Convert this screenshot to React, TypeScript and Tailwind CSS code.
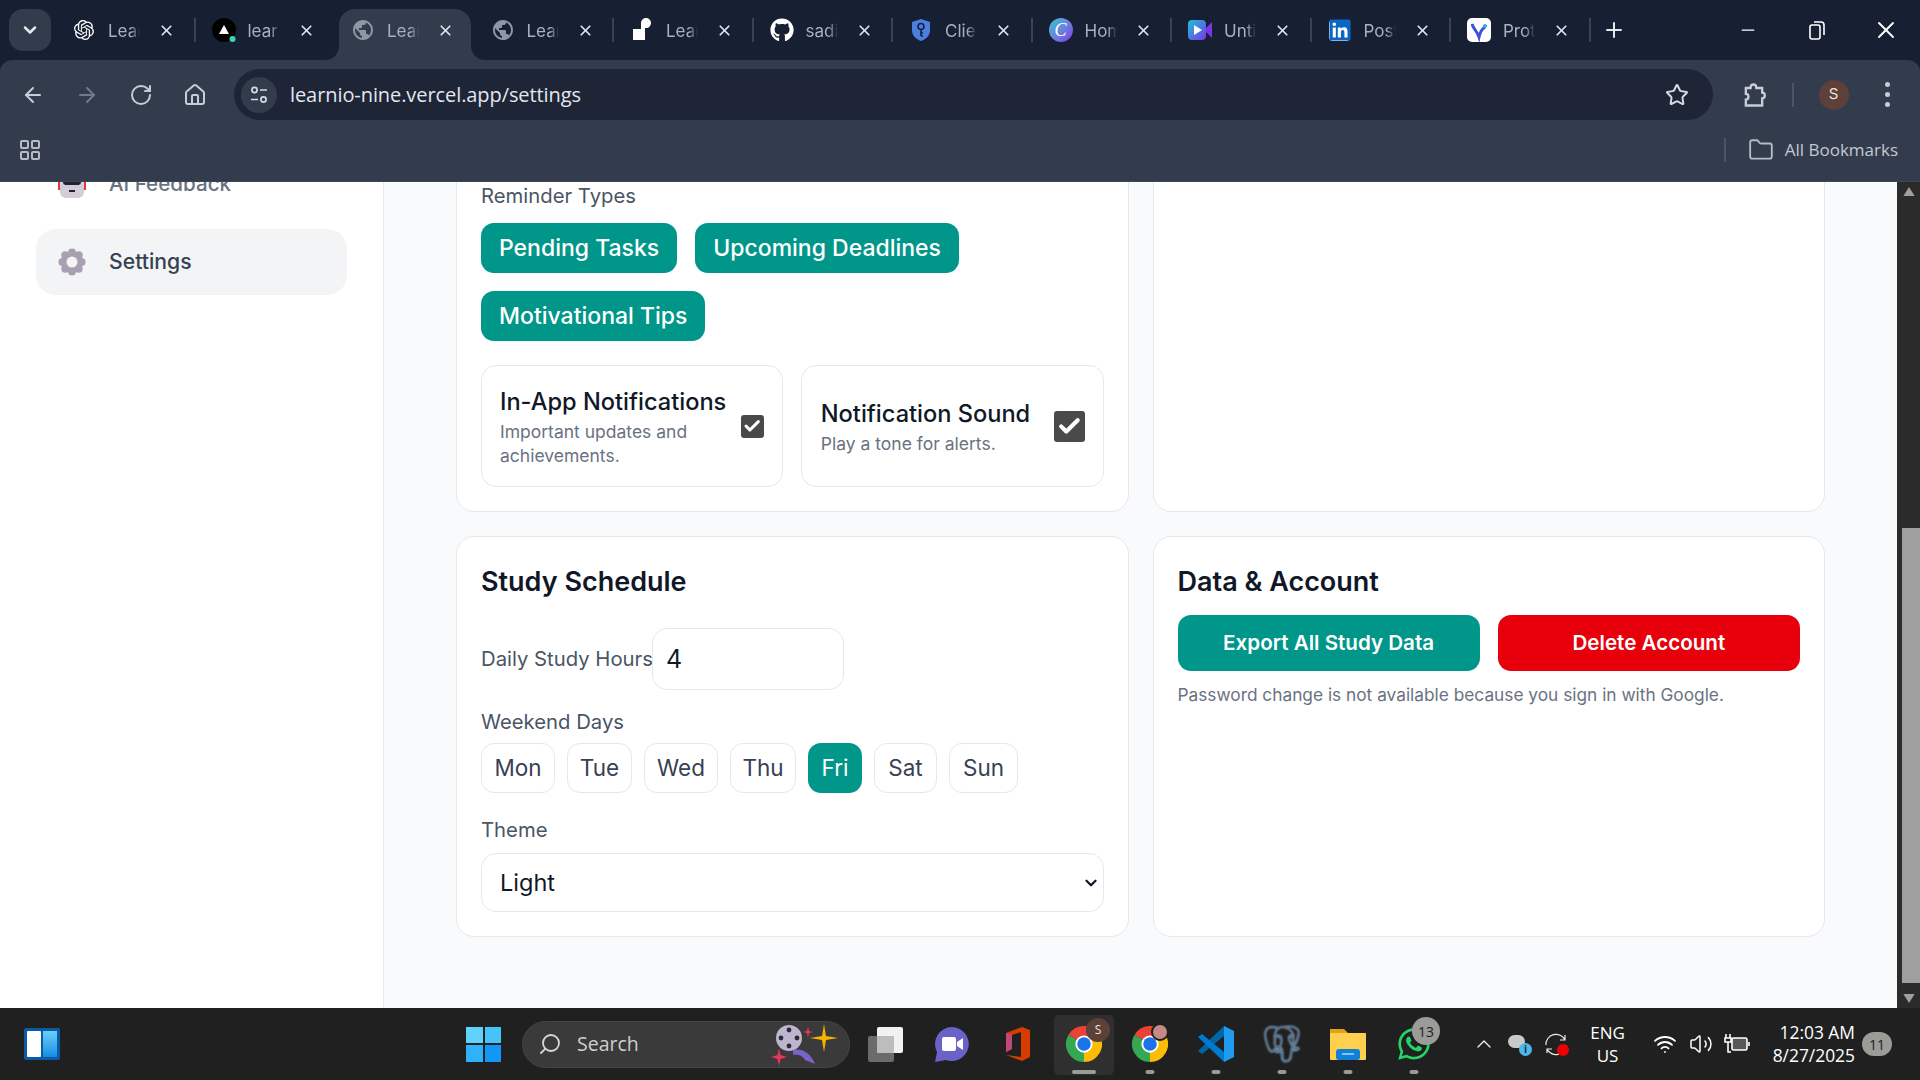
import React from 'react';
import {
  ArrowLeft,
  ArrowRight,
  Check,
  ChevronDown,
  ChevronUp,
  Folder,
  LayoutGrid,
  Minus,
  Plus,
  RotateCw,
  House,
  Search,
  Star,
  Volume2,
  Wifi,
  X,
} from 'lucide-react';
import { FaGithub, FaLinkedin, FaWhatsapp } from 'react-icons/fa';
import { MdPublic } from 'react-icons/md';
import { SiOpenai, SiPostgresql } from 'react-icons/si';

const Chrome = () => (
  <svg viewBox="0 0 48 48" className="w-9 h-9">
    <path d="M24 24 L3.2 12 A24 24 0 0 1 44.8 12 Z" fill="#ea4335" />
    <path d="M24 24 L3.2 12 A24 24 0 0 0 24 48 Z" fill="#34a853" />
    <path d="M24 24 L44.8 12 A24 24 0 0 1 24 48 Z" fill="#fbbc04" />
    <circle cx="24" cy="24" r="11.5" fill="#fff" />
    <circle cx="24" cy="24" r="9" fill="#1a73e8" />
  </svg>
);

const tabs: { title: string; icon: React.ReactNode; active?: boolean }[] = [
  { title: 'Lear', icon: <SiOpenai className="w-5 h-5 text-white" /> },
  {
    title: 'lear',
    icon: (
      <svg viewBox="0 0 24 24" className="w-6 h-6">
        <circle cx="12" cy="12" r="12" fill="#000" />
        <path d="M12 7 L17 16 H7 Z" fill="#fff" />
        <circle cx="20.5" cy="21" r="3" fill="#34d9b0" />
      </svg>
    ),
  },
  { title: 'Lear', icon: <MdPublic className="w-6 h-6 text-[#8f97a5]" />, active: true },
  { title: 'Lear', icon: <MdPublic className="w-6 h-6 text-[#8f97a5]" /> },
  {
    title: 'Lear',
    icon: (
      <svg viewBox="0 0 24 24" className="w-6 h-6">
        <path d="M3 11 H11 V5 A5 5 0 0 1 21 5 A5 5 0 0 1 15 10 V22 H3 Z" fill="#fff" />
      </svg>
    ),
  },
  { title: 'sadi', icon: <FaGithub className="w-6 h-6 text-white" /> },
  {
    title: 'Clier',
    icon: (
      <svg viewBox="0 0 24 24" className="w-6 h-6">
        <path d="M12 1 L21 4 V12 C21 18 17 21 12 23 C7 21 3 18 3 12 V4 Z" fill="#4b7fe0" />
        <circle cx="12" cy="8.5" r="3" fill="none" stroke="#16213a" strokeWidth="1.6" />
        <path d="M12 11.5 V18 M12 15 H14 M12 18 H14" stroke="#16213a" strokeWidth="1.6" />
      </svg>
    ),
  },
  {
    title: 'Hom',
    icon: (
      <div className="w-6 h-6 rounded-full bg-gradient-to-br from-[#00c4cc] to-[#7d2ae8] flex items-center justify-center text-white italic text-[18px] leading-none [font-family:'Liberation_Serif',serif]">
        C
      </div>
    ),
  },
  {
    title: 'Unti',
    icon: (
      <svg viewBox="0 0 24 24" className="w-6 h-6">
        <defs>
          <linearGradient id="vid" x1="0" y1="0" x2="1" y2="1">
            <stop offset="0" stopColor="#18c5d8" />
            <stop offset="1" stopColor="#7a35e8" />
          </linearGradient>
        </defs>
        <rect x="0" y="2" width="18" height="20" rx="4" fill="url(#vid)" />
        <path d="M18 10 L24 4 V20 L18 14 Z" fill="#7a35e8" />
        <path d="M6 7 L14 12 L6 17 Z" fill="#fff" />
      </svg>
    ),
  },
  {
    title: 'Post',
    icon: (
      <div className="w-[21px] h-[21px] bg-white rounded-sm flex items-center justify-center">
        <FaLinkedin className="w-[24px] h-[24px] shrink-0 text-[#0a66c2]" />
      </div>
    ),
  },
  {
    title: 'Prot',
    icon: (
      <svg viewBox="0 0 24 24" className="w-6 h-6">
        <rect width="24" height="24" rx="5" fill="#fff" />
        <path d="M5 6 C7 12 10 13 12 19 C13 14 15 11 18 9" fill="none" stroke="#3f51d8" strokeWidth="3" />
        <circle cx="18" cy="8" r="2" fill="#2ea8f0" />
      </svg>
    ),
  },
];

const Tab = ({ title, icon, active, showSep }: { title: string; icon: React.ReactNode; active?: boolean; showSep: boolean }) => (
  <div className="relative w-[139.5px] h-[51px] shrink-0 flex items-center pb-[9px]">
    {active && (
      <>
        <div className="absolute inset-y-0 left-1 right-1 bg-[#333c4d] rounded-t-2xl" />
        <svg viewBox="0 0 14 14" className="absolute bottom-0 -left-[10px] w-[14px] h-[14px]">
          <path d="M14 0 V14 H0 A14 14 0 0 0 14 0 Z" fill="#333c4d" />
        </svg>
        <svg viewBox="0 0 14 14" className="absolute bottom-0 -right-[10px] w-[14px] h-[14px]">
          <path d="M0 0 V14 H14 A14 14 0 0 1 0 0 Z" fill="#333c4d" />
        </svg>
      </>
    )}
    <div className="relative w-[56px] flex justify-center">{icon}</div>
    <span className="relative -ml-[4px] mt-[3px] w-[32px] overflow-hidden whitespace-nowrap text-[17px] text-[#a9b1bf] [mask-image:linear-gradient(to_right,black_70%,transparent)]">
      {title}
    </span>
    <X className="relative ml-[18px] w-[17px] h-[17px] text-[#dfe3ea]" strokeWidth={2.4} />
    {showSep && <div className="absolute right-0 top-[9px] w-[2px] h-6 bg-[#3a4354]" />}
  </div>
);

const TabStrip = () => (
  <div className="h-[60px] shrink-0 bg-[#172032] flex items-start pt-[9px]">
    <div className="ml-[9px] w-[42px] h-[42px] rounded-[14px] bg-[#333c4d] flex items-center justify-center">
      <ChevronDown className="w-5 h-5 text-[#e5e7eb]" strokeWidth={3} />
    </div>
    <div className="ml-[5px] flex">
      {tabs.map((t, i) => (
        <Tab key={i} title={t.title} icon={t.icon} active={t.active} showSep={i !== 1 && i !== 2} />
      ))}
    </div>
    <div className="ml-[11px] h-[42px] flex items-center">
      <Plus className="w-6 h-6 text-[#e5e7eb]" strokeWidth={2} />
    </div>
    <div className="ml-auto h-[42px] flex items-center text-white">
      <div className="w-[69px] flex justify-center"><Minus className="w-5 h-5" strokeWidth={1.5} /></div>
      <div className="w-[69px] flex justify-center">
        <svg viewBox="0 0 16 20" className="w-[16px] h-[20px]" fill="none" stroke="currentColor" strokeWidth="1.6">
          <rect x="1" y="5" width="10" height="14" rx="2" />
          <path d="M5 2 H12 A3 3 0 0 1 15 5 V15" />
        </svg>
      </div>
      <div className="w-[69px] flex justify-center"><X className="w-7 h-7" strokeWidth={1.6} /></div>
    </div>
  </div>
);

const Toolbar = () => (
  <div className="h-[122px] shrink-0 bg-[#333c4d] rounded-t-xl border-b border-[#3f4756]">
    <div className="h-[60px] flex items-center mt-0 pt-[9px]">
      <div className="w-[234px] flex items-center text-[#c7ccd6]">
        <div className="w-[54px] ml-[6px] flex justify-center"><ArrowLeft className="w-6 h-6" /></div>
        <div className="w-[54px] flex justify-center"><ArrowRight className="w-6 h-6 text-[#737b8a]" /></div>
        <div className="w-[54px] flex justify-center"><RotateCw className="w-6 h-6" /></div>
        <div className="w-[54px] flex justify-center"><House className="w-6 h-6" /></div>
      </div>
      <div className="w-[1479px] h-[51px] rounded-full bg-[#1d2536] flex items-center pl-[7px] pr-[24px]">
        <div className="w-9 h-9 rounded-full bg-[#333c4d] flex items-center justify-center text-[#d5d9e0]">
          <svg viewBox="0 0 20 20" className="w-5 h-5" fill="none" stroke="currentColor" strokeWidth="1.7">
            <circle cx="5.5" cy="5" r="2.6" />
            <path d="M11 5 H18 M2 14.5 H9" />
            <circle cx="14.5" cy="14.5" r="2.6" />
          </svg>
        </div>
        <span className="ml-[13px] text-[20px] text-[#e3e7ee] [font-family:'Open_Sans',sans-serif] tracking-[-0.08px]">
          learnio-nine.vercel.app/settings
        </span>
        <Star className="ml-auto w-6 h-6 text-[#d5d9e0]" strokeWidth={2} />
      </div>
      <div className="flex-1 flex items-center text-[#c7ccd6]">
        <div className="ml-[26px] w-[30px] flex justify-center">
          <svg viewBox="0 0 24 24" className="w-7 h-7" fill="none" stroke="currentColor" strokeWidth="2">
            <path d="M5 6 H9 C9 2 14 2 14 6 H19 V10 C22 10 22 15 19 15 V21 H5 V16 C8 16 8 11 5 11 Z" />
          </svg>
        </div>
        <div className="ml-[23px] w-[1.5px] h-6 bg-[#4c5565]" />
        <div className="ml-[25px] w-[30px] h-[30px] rounded-full bg-[#5d4037] flex items-center justify-center text-[15px] text-[#e9e2df]">
          S
        </div>
        <div className="ml-[36px] flex flex-col gap-[5px]">
          <div className="w-[5px] h-[5px] rounded-full bg-[#c7ccd6]" />
          <div className="w-[5px] h-[5px] rounded-full bg-[#c7ccd6]" />
          <div className="w-[5px] h-[5px] rounded-full bg-[#c7ccd6]" />
        </div>
      </div>
    </div>
    <div className="h-[60px] flex items-center pl-[18px] text-[#b6bbc5]">
      <LayoutGrid className="w-[24px] h-[24px]" strokeWidth={2} />
      <div className="ml-auto w-[1.5px] h-6 bg-[#4c5565]" />
      <Folder className="ml-[22px] w-[26px] h-[26px]" strokeWidth={1.7} />
      <span className="ml-[11px] mr-[22px] text-[17px] text-[#c4c8d0] [font-family:'Open_Sans',sans-serif]">
        All Bookmarks
      </span>
    </div>
  </div>
);

const Sidebar = () => (
  <aside className="w-[384px] shrink-0 bg-white border-r border-gray-200 overflow-hidden px-[36px]">
    <div className="w-[311px] -mt-[31px] flex flex-col gap-[12px]">
      <div className="h-[66px] flex items-center pl-[22px] gap-[23px] text-[20.6px] font-medium text-gray-500">
        <svg viewBox="0 0 28 28" className="w-7 h-7">
          <rect x="0" y="4" width="3" height="16" fill="#e53935" />
          <rect x="25" y="4" width="3" height="16" fill="#e53935" />
          <rect x="2" y="0" width="24" height="28" rx="6" fill="#d3cdd8" />
          <rect x="5" y="2" width="18" height="13" rx="3" fill="#1f2430" />
          <rect x="8" y="7" width="3" height="3" fill="#2196f3" />
          <rect x="17" y="7" width="3" height="3" fill="#2196f3" />
          <rect x="11" y="20" width="6" height="2" fill="#1f2430" />
        </svg>
        AI Feedback
      </div>
      <div className="h-[66px] flex items-center pl-[22px] gap-[23px] rounded-[20px] bg-gray-100 text-[21.2px] font-medium text-gray-700">
        <svg viewBox="0 0 28 28" className="w-7 h-7">
          <g fill="#a89fb0">
            <circle cx="14" cy="4.5" r="4" />
            <circle cx="14" cy="23.5" r="4" />
            <circle cx="4.5" cy="14" r="4" />
            <circle cx="23.5" cy="14" r="4" />
            <circle cx="7.3" cy="7.3" r="4" />
            <circle cx="20.7" cy="7.3" r="4" />
            <circle cx="7.3" cy="20.7" r="4" />
            <circle cx="20.7" cy="20.7" r="4" />
            <circle cx="14" cy="14" r="10" />
          </g>
          <circle cx="14" cy="14" r="5.5" fill="#f3f4f6" />
        </svg>
        Settings
      </div>
    </div>
  </aside>
);

const tealChip = 'h-[50px] px-[18px] rounded-[13px] bg-teal-600 text-white text-[23px] font-medium flex items-center';
const label = 'text-[20.3px] leading-[30px] text-gray-600';

const Toggle = ({ title, sub, size, pad }: { title: string; sub: string; size: string; pad: string }) => (
  <div className={`flex-1 border border-gray-200 rounded-[15px] flex items-center justify-between ${pad}`}>
    <div className="pt-[3px]">
      <div className="text-[23.6px] leading-[30px] font-medium text-gray-900">{title}</div>
      <div className="text-[17.5px] leading-[24px] text-gray-500 mt-[3px]">{sub}</div>
    </div>
    <div className={`${size} shrink-0 rounded-[3px] bg-[#4a4a4a] flex items-center justify-center`}>
      <Check className="w-[80%] h-[80%] text-white" strokeWidth={4} />
    </div>
  </div>
);

const days = [
  { name: 'Mon', width: 'w-[74px]' },
  { name: 'Tue', width: 'w-[65px]' },
  { name: 'Wed', width: 'w-[74px]' },
  { name: 'Thu', width: 'w-[66px]' },
  { name: 'Fri', width: 'w-[54px]' },
  { name: 'Sat', width: 'w-[63px]' },
  { name: 'Sun', width: 'w-[69px]' },
];

const Scrollbar = () => (
  <div className="w-[23px] shrink-0 bg-[#2b2b2b] flex flex-col">
    <div className="h-[19px] flex items-center justify-center">
      <svg viewBox="0 0 10 8" className="w-[12px] h-[9px]"><path d="M5 0 L10 8 H0 Z" fill="#9f9f9f" /></svg>
    </div>
    <div className="flex-1 pl-[5px] flex flex-col">
      <div className="h-[327px]" />
      <div className="h-[455px] bg-[#9f9f9f]" />
    </div>
    <div className="h-[19px] flex items-center justify-center">
      <svg viewBox="0 0 10 8" className="w-[12px] h-[9px]"><path d="M5 8 L10 0 H0 Z" fill="#9f9f9f" /></svg>
    </div>
  </div>
);

const Main = () => (
  <main className="flex-1 min-w-0 bg-gray-50 overflow-hidden pl-[72px] pr-[72px]">
    <div className="grid grid-cols-2 gap-[24px]">
      {/* first row, scrolled so that its top is out of view */}
      <section className="-mt-[31px] h-[361px] bg-white border border-gray-200 rounded-[18px] px-[24px] pt-[29px]">
        <div className={label}>Reminder Types</div>
        <div className="mt-[12px] flex flex-wrap gap-[18px]">
          <div className={tealChip}>Pending Tasks</div>
          <div className={tealChip}>Upcoming Deadlines</div>
          <div className={tealChip}>Motivational Tips</div>
        </div>
        <div className="mt-[24px] h-[122px] flex gap-[18px]">
          <Toggle title="In-App Notifications" sub="Important updates and achievements." size="w-[23px] h-[23px]" pad="pl-[18px] pr-[18px]" />
          <Toggle title="Notification Sound" sub="Play a tone for alerts." size="w-[31px] h-[31px]" pad="pl-[19px] pr-[18px]" />
        </div>
      </section>
      <section className="-mt-[31px] h-[361px] bg-white border border-gray-200 rounded-[18px]" />

      <section className="h-[401px] bg-white border border-gray-200 rounded-[18px] px-[24px] pt-[25px]">
        <h2 className="text-[27px] leading-[40px] font-semibold text-gray-900">Study Schedule</h2>
        <div className="mt-[26px] flex items-center">
          <span className={label}>Daily Study Hours</span>
          <input
            readOnly
            value="4"
            className="-ml-[1px] w-[192px] h-[62px] border border-gray-200 rounded-[15px] px-[13px] text-[25px] text-gray-900 bg-white"
          />
        </div>
        <div className={`${label} mt-[17px]`}>Weekend Days</div>
        <div className="mt-[6px] flex gap-[12px]">
          {days.map((d) =>
            d.name === 'Fri' ? (
              <div key={d.name} className={`${d.width} h-[50px] rounded-[13px] bg-teal-600 text-white text-[22.5px] flex items-center justify-center`}>
                {d.name}
              </div>
            ) : (
              <div key={d.name} className={`${d.width} h-[50px] rounded-[13px] border border-gray-200 text-gray-700 text-[22.5px] flex items-center justify-center`}>
                {d.name}
              </div>
            )
          )}
        </div>
        <div className={`${label} mt-[22px]`}>Theme</div>
        <div className="mt-[8px] h-[59px] border border-gray-200 rounded-[15px] pl-[18px] pr-[3px] flex items-center justify-between text-[23.5px] text-gray-900">
          Light
          <ChevronDown className="w-[18px] h-[18px] text-gray-900" strokeWidth={3} />
        </div>
      </section>

      <section className="h-[401px] bg-white border border-gray-200 rounded-[18px] px-[24px] pt-[25px]">
        <h2 className="text-[27px] leading-[40px] font-semibold text-gray-900">Data &amp; Account</h2>
        <div className="mt-[13px] grid grid-cols-2 gap-[18px]">
          <div className="h-[56px] rounded-[13px] bg-teal-600 text-white text-[20.6px] font-semibold flex items-center justify-center">
            Export All Study Data
          </div>
          <div className="h-[56px] rounded-[13px] bg-red-600 text-white text-[20.6px] font-semibold flex items-center justify-center">
            Delete Account
          </div>
        </div>
        <p className="mt-[12px] text-[17.3px] leading-[24px] text-gray-500">
          Password change is not available because you sign in with Google.
        </p>
      </section>
    </div>
  </main>
);

const Dot = ({ wide }: { wide?: boolean }) => (
  <div className={`absolute bottom-[6px] left-1/2 -translate-x-1/2 h-[4px] rounded-full bg-[#9a9a9a] ${wide ? 'w-[24px]' : 'w-[9px]'}`} />
);

const AppSlot = ({ children, dot, wide }: { children: React.ReactNode; dot?: boolean; wide?: boolean }) => (
  <div className="relative w-[66px] h-[72px] flex items-center justify-center">
    {wide && <div className="absolute inset-x-[3px] top-[7px] bottom-[5px] rounded-[5px] bg-[#2f2f2f]" />}
    <div className="relative">{children}</div>
    {dot && <Dot wide={wide} />}
  </div>
);

const Taskbar = () => (
  <footer className="h-[72px] shrink-0 bg-[#202020] flex items-center text-white [font-family:'Open_Sans',sans-serif]">
    <div className="ml-[24px] w-[36px] h-[32px] bg-[#0b5aa5] rounded-[2px] flex gap-[2px] p-[3px]">
      <div className="w-[14px] bg-white rounded-[1px]" />
      <div className="flex-1 bg-gradient-to-b from-[#69d0fb] to-[#0c8de0]" />
    </div>
    <div className="ml-[406px] w-[35px] h-[35px] grid grid-cols-2 grid-rows-2 gap-[2px]">
      <div className="bg-[#5fd3fb]" />
      <div className="bg-[#45c3fb]" />
      <div className="bg-[#2fb2fb]" />
      <div className="bg-[#1297f5]" />
    </div>
    <div className="ml-[21px] w-[328px] h-[47px] rounded-full bg-[#3a3a3a] border border-[#444] flex items-center pl-[15px] pr-[6px]">
      <Search className="w-[24px] h-[24px] -scale-x-100 text-[#d8d8d8]" strokeWidth={1.8} />
      <span className="ml-[15px] text-[19.5px] text-[#cfcfcf]">Search</span>
      <svg viewBox="0 0 76 44" className="ml-auto w-[76px] h-[44px]">
        <circle cx="22" cy="16" r="13" fill="#bdb6cf" />
        <g fill="#2d2a3a">
          <circle cx="22" cy="8" r="2.4" />
          <circle cx="22" cy="24" r="2.4" />
          <circle cx="14" cy="16" r="2.4" />
          <circle cx="30" cy="16" r="2.4" />
        </g>
        <path d="M26 28 C36 26 44 32 48 42 L38 38 C36 34 32 32 26 33 Z" fill="#7a62c9" />
        <path d="M57 2 L59 14 L71 16 L59 18 L57 30 L55 18 L43 16 L55 14 Z" fill="#f5b400" />
        <path d="M12 26 L13.5 33 L20 35 L13.5 37 L12 44 L10.5 37 L4 35 L10.5 33 Z" fill="#e8355c" />
        <path d="M41 4 L42 9 L46 10 L42 11 L41 16 L40 11 L36 10 L40 9 Z" fill="#e8355c" />
      </svg>
    </div>
    <div className="ml-[3px] flex">
      <AppSlot>
        <svg viewBox="0 0 36 36" className="w-[36px] h-[36px]">
          <rect x="0" y="10" width="26" height="26" rx="2" fill="#6b6b6b" />
          <rect x="9" y="1" width="26" height="26" rx="2" fill="#f2f2f2" />
          <rect x="9" y="10" width="17" height="17" fill="#bdbdbd" />
        </svg>
      </AppSlot>
      <AppSlot>
        <svg viewBox="0 0 36 36" className="w-[36px] h-[36px]">
          <path d="M18 1 A17 17 0 1 1 12 34 L1 36 L3 26 A17 17 0 0 1 18 1 Z" fill="#6a62c8" />
          <rect x="8" y="11" width="14" height="14" rx="2" fill="#fff" />
          <path d="M23 16 L29 12 V24 L23 20 Z" fill="#fff" />
        </svg>
      </AppSlot>
      <AppSlot>
        <svg viewBox="0 0 26 34" className="w-[26px] h-[34px]">
          <path d="M1 6 L17 0 L25 3 V30 L17 34 L1 28 L16 30 V5 L7 8 V22 L1 25 Z" fill="#d83b01" />
          <path d="M1 6 L7 8 V22 L1 25 Z" fill="#c2477a" />
        </svg>
      </AppSlot>
      <AppSlot dot wide>
        <div className="relative">
          <Chrome />
          <div className="absolute -top-[8px] -right-[8px] w-[24px] h-[24px] rounded-full bg-[#5d4037] flex items-center justify-center text-[12px] text-[#e9e2df]">
            S
          </div>
        </div>
      </AppSlot>
      <AppSlot dot>
        <div className="relative">
          <Chrome />
          <div className="absolute -top-[3px] -right-[1px] w-[18px] h-[18px] rounded-full bg-[#c58a84] border-2 border-[#202020]" />
        </div>
      </AppSlot>
      <AppSlot dot>
        <svg viewBox="0 0 36 36" className="w-[36px] h-[36px]">
          <path d="M26 0 L36 5 V31 L26 36 Z" fill="#1f9cf0" />
          <path d="M26 0 L26 10 L9 24 L4 28 L0 25 L26 0 Z" fill="#0065a9" />
          <path d="M0 11 L4 8 L26 26 V36 Z" fill="#007acc" />
        </svg>
      </AppSlot>
      <AppSlot dot>
        <SiPostgresql className="w-[36px] h-[36px] text-[#3f74a3] [filter:drop-shadow(0_0_1px_#dfe8f0)]" />
      </AppSlot>
      <AppSlot dot>
        <svg viewBox="0 0 36 36" className="w-[36px] h-[36px]">
          <path d="M0 3 H14 L18 7 H36 V33 H0 Z" fill="#e0a21a" />
          <rect x="0" y="7" width="36" height="27" rx="1" fill="#ffd04d" />
          <rect x="6" y="23" width="24" height="11" rx="3" fill="#1280d6" />
          <rect x="12" y="27" width="12" height="2" fill="#7fc4f5" />
        </svg>
      </AppSlot>
      <AppSlot dot>
        <div className="relative">
          <FaWhatsapp className="w-[36px] h-[36px] text-[#25d366]" />
          <div className="absolute -top-[9px] -right-[8px] w-[28px] h-[28px] rounded-full bg-[#9b9b97] flex items-center justify-center text-[14px] text-[#1d1d1d]">
            13
          </div>
        </div>
      </AppSlot>
    </div>
    <div className="ml-[19px] flex items-center">
      <div className="w-[36px] flex justify-center"><ChevronUp className="w-6 h-6 text-[#eee]" strokeWidth={1.4} /></div>
      <div className="w-[36px] flex justify-center">
        <div className="relative w-[24px] h-[20px]">
          <div className="absolute left-0 top-[1px] w-[17px] h-[13px] rounded-full bg-[#c9c9c9]" />
          <div className="absolute right-0 bottom-[-2px] w-[13px] h-[13px] rounded-full bg-[#4fb6ec] text-[10px] leading-[13px] text-center font-bold text-[#10324a]">i</div>
        </div>
      </div>
      <div className="w-[36px] flex justify-center">
        <div className="relative">
          <svg viewBox="0 0 24 24" className="w-[24px] h-[24px]" fill="none" stroke="#eee" strokeWidth="1.2">
            <path d="M2 13 A10 10 0 0 1 21 8 M21 3 V8 H16 M22 13 A10 10 0 0 1 3 17 M3 21 V17 H8" />
          </svg>
          <div className="absolute right-[-1px] bottom-[0px] w-[12px] h-[12px] rounded-full bg-[#f00000]" />
        </div>
      </div>
      <div className="w-[64px] pl-[3px] flex flex-col items-center text-[17px] leading-[23px]">
        <span>ENG</span>
        <span>US</span>
      </div>
      <div className="ml-[9px] w-[36px] flex justify-center"><Wifi className="w-[24px] h-[24px]" strokeWidth={1.8} /></div>
      <div className="w-[36px] flex justify-center"><Volume2 className="w-[24px] h-[24px]" strokeWidth={1.5} /></div>
      <div className="w-[36px] flex justify-center">
        <svg viewBox="0 0 26 22" className="w-[26px] h-[22px]" fill="none" stroke="#fff" strokeWidth="1.6">
          <path d="M2 1 V5 M6 1 V5 M1 5 H7 V9 H1 Z M4 9 V19 H7" />
          <rect x="8" y="5" width="15" height="12" rx="1.5" fill="#fff" fillOpacity="0.25" />
          <path d="M25 9 V13" />
        </svg>
      </div>
    </div>
    <div className="ml-[16px] w-[84px] flex flex-col items-end text-[17.4px] leading-[23px] whitespace-nowrap">
      <span>12:03 AM</span>
      <span>8/27/2025</span>
    </div>
    <div className="ml-[7px] w-[30px] h-[24px] rounded-full bg-[#9b9b97] flex items-center justify-center text-[14px] text-[#1d1d1d]">
      11
    </div>
  </footer>
);

const App = () => {
  return (
    <div className="w-[1920px] h-[1080px] flex flex-col overflow-hidden bg-[#172032] [font-family:Inter,sans-serif]">
      <TabStrip />
      <Toolbar />
      <div className="flex-1 min-h-0 flex">
        <Sidebar />
        <Main />
        <Scrollbar />
      </div>
      <Taskbar />
    </div>
  );
};

export default App;
